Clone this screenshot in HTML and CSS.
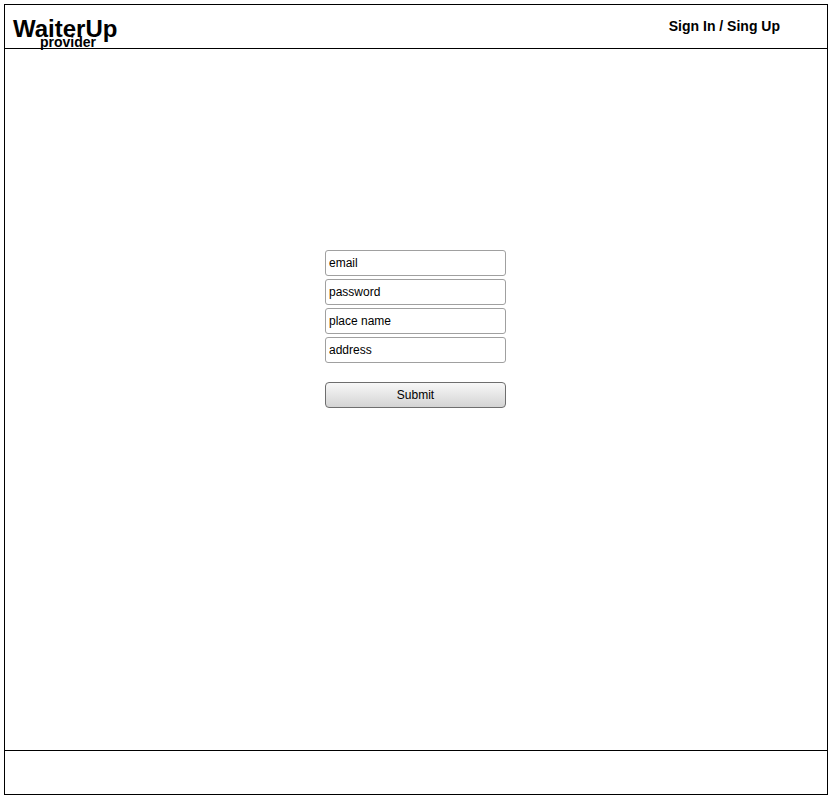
FILE: index.html
```html
<!DOCTYPE html>
<html>
<head>
<meta charset="utf-8">
<link rel="stylesheet" href="styles.css">
</head>
<body>
<div class="frame">
  <header class="header">
    <div class="brand">
      <div class="brand-name">WaiterUp</div>
      <div class="brand-sub">provider</div>
    </div>
    <div class="auth">Sign In / Sing Up</div>
  </header>
  <main class="main">
    <form class="form">
      <div class="field">email</div>
      <div class="field">password</div>
      <div class="field">place name</div>
      <div class="field">address</div>
      <div class="submit">Submit</div>
    </form>
  </main>
  <footer class="footer"></footer>
</div>
</body>
</html>
```
FILE: styles.css
```css
html, body {
  margin: 0;
  padding: 0;
  background: #fff;
}
body {
  font-family: "Liberation Sans", Arial, sans-serif;
  color: #000;
}
.frame {
  margin: 4px 0 0 4px;
  width: 824px;
  height: 791px;
  box-sizing: border-box;
  border: 1px solid #000;
  display: flex;
  flex-direction: column;
}
.header {
  height: 44px;
  box-sizing: border-box;
  border-bottom: 1px solid #000;
  display: flex;
  justify-content: space-between;
  align-items: flex-start;
}
.brand {
  padding: 10px 0 0 8px;
}
.brand-name {
  font-size: 24px;
  font-weight: bold;
  line-height: 28px;
}
.brand-sub {
  font-size: 14px;
  font-weight: bold;
  line-height: 14px;
  margin: -8px 0 0 27px;
}
.auth {
  font-size: 14px;
  font-weight: bold;
  line-height: 16px;
  padding: 13px 47px 0 0;
}
.main {
  flex: 1;
  border-bottom: 1px solid #000;
  display: flex;
  justify-content: center;
  padding-top: 201px;
}
.form {
  width: 181px;
  display: flex;
  flex-direction: column;
  gap: 3px;
  margin-right: 1px;
}
.field {
  height: 26px;
  box-sizing: border-box;
  border: 1px solid #a0a0a0;
  border-radius: 3px;
  font-size: 12px;
  line-height: 24px;
  padding-left: 3px;
}
.submit {
  margin-top: 16px;
  height: 26px;
  box-sizing: border-box;
  border: 1px solid #6e6e6e;
  border-radius: 4px;
  background: linear-gradient(#f8f8f8, #d4d4d4);
  font-size: 12px;
  line-height: 24px;
  text-align: center;
}
.footer {
  height: 43px;
}
```
